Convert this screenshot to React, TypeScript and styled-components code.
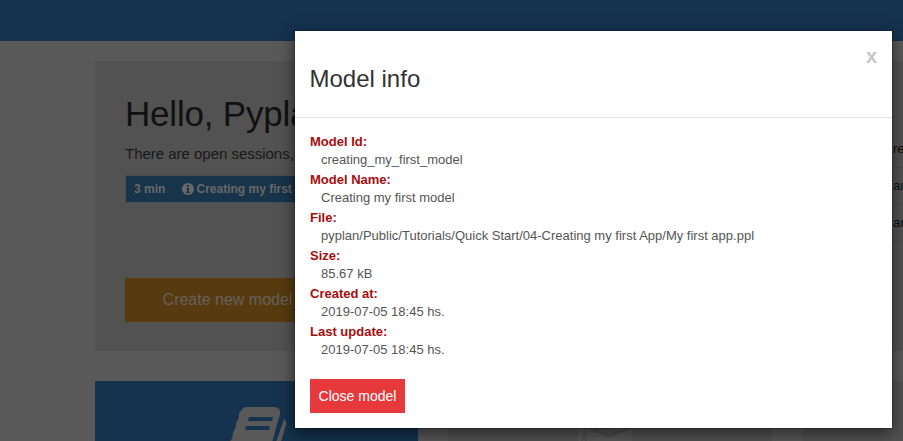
import React from 'react';
import styled, { createGlobalStyle } from 'styled-components';

const Global = createGlobalStyle`
  * { box-sizing: border-box; }
  body { margin: 0; overflow: hidden; background: #fff; font-family: "Liberation Sans", Arial, sans-serif; }
`;

const Page = styled.div`
  position: relative;
  width: 903px;
  height: 441px;
  overflow: hidden;
  background: #595959;
`;
const TopBar = styled.header`
  height: 41px;
  background: #15324e;
`;
const Content = styled.main`
  width: 1030px;
  padding: 20px 0 0 95px;
`;
const Row = styled.div`
  display: flex;
  gap: 30px;
  margin-bottom: 30px;
`;
const Welcome = styled.section`
  width: 677px;
  height: 290px;
  padding: 30px;
  background: #525252;
`;
const Heading = styled.h1`
  margin: 0;
  font-size: 35px;
  line-height: 46px;
  font-weight: 400;
  letter-spacing: -0.2px;
  color: #111;
  white-space: nowrap;
`;
const Lead = styled.p`
  margin: 7px 0 0;
  font-size: 15px;
  line-height: 20px;
  color: #181818;
  letter-spacing: -0.02px;
`;
const Session = styled.div`
  display: flex;
  align-items: center;
  width: 400px;
  height: 28px;
  margin-top: 11px;
  padding-left: 8px;
  border: 1px solid #4a4d50;
  font-size: 12px;
  font-weight: 700;
  color: #686868;
  background: #17344b;
  white-space: nowrap;
`;
const Minutes = styled.span`
  width: 47.5px;
`;
const InfoIcon = styled.svg`
  width: 12px;
  height: 12px;
  margin-right: 3px;
`;
const CreateButton = styled.button`
  display: block;
  width: 205px;
  height: 44px;
  margin-top: 75px;
  padding: 0;
  border: 0;
  font: 16px "Liberation Sans", Arial, sans-serif;
  color: #666159;
  background: #573a10;
`;
const Activity = styled.aside`
  width: 180px;
  height: 290px;
  padding: 70px 0 0 78px;
  background: #525252;
`;
const ActivityRow = styled.div`
  height: 37px;
  padding: 10px 0 0 13px;
  border-bottom: 1px solid #494949;
  font-size: 13px;
  line-height: 16px;
  color: #111;
`;
const Tile = styled.section<{ $primary?: boolean }>`
  display: flex;
  justify-content: center;
  flex: 0 0 ${p => (p.$primary ? 323 : 324)}px;
  height: 120px;
  padding-top: 25px;
  background: ${p => (p.$primary ? '#15324e' : '#525252')};
`;
const TileIcon = styled.svg`
  width: 64px;
  height: 64px;
`;
const Modal = styled.div`
  position: absolute;
  left: 294px;
  top: 30px;
  width: 599px;
  height: 399px;
  border: 1px solid rgba(0, 0, 0, 0.2);
  background: #fff;
  background-clip: padding-box;
  box-shadow: 0 5px 15px rgba(0, 0, 0, 0.5);
`;
const ModalHeader = styled.div`
  display: flex;
  justify-content: space-between;
  height: 87px;
  padding: 15px 15px 15px 14.5px;
  border-bottom: 1px solid #e1e1e1;
`;
const ModalTitle = styled.h2`
  margin: 19px 0 0;
  font-size: 24px;
  line-height: 28px;
  font-weight: 400;
  color: #333;
`;
const Close = styled.button`
  height: 20px;
  padding: 0;
  border: 0;
  background: none;
  font: 700 20px/18px "Liberation Sans", Arial, sans-serif;
  color: #c6c6c6;
`;
const ModalBody = styled.div`
  padding: 14px 15px;
`;
const Details = styled.dl`
  margin: 0 0 19px;
  font-size: 13px;
  line-height: 19px;
`;
const Term = styled.dt`
  font-weight: 700;
  color: #a80c0c;
`;
const Value = styled.dd`
  height: 19px;
  margin: 0 0 0 11px;
  line-height: 18px;
  color: #555;
`;
const CloseModel = styled.button`
  display: block;
  width: 95px;
  height: 34px;
  padding: 0;
  border: 0;
  font: 14px "Liberation Sans", Arial, sans-serif;
  color: #fff;
  background: #e6393b;
`;

const details: [string, string][] = [
  ['Model Id:', 'creating_my_first_model'],
  ['Model Name:', 'Creating my first model'],
  ['File:', 'pyplan/Public/Tutorials/Quick Start/04-Creating my first App/My first app.ppl'],
  ['Size:', '85.67 kB'],
  ['Created at:', '2019-07-05 18:45 hs.'],
  ['Last update:', '2019-07-05 18:45 hs.'],
];

export default function App() {
  return (
    <>
      <Global />
      <Page>
        <TopBar />
        <Content>
          <Row>
            <Welcome>
              <Heading>Hello, Pyplan</Heading>
              <Lead>There are open sessions,</Lead>
              <Session>
                <Minutes>3 min</Minutes>
                <InfoIcon viewBox="0 0 12 12">
                  <circle cx="6" cy="6" r="6" fill="#686868" />
                  <path d="M5 2h2v2H5zM4 5h3v4h1v1H4V9h1V6H4z" fill="#17344b" />
                </InfoIcon>
                Creating my first
              </Session>
              <CreateButton>Create new model</CreateButton>
            </Welcome>
            <Activity>
              <ActivityRow>re</ActivityRow>
              <ActivityRow>an</ActivityRow>
              <ActivityRow>an</ActivityRow>
            </Activity>
          </Row>
          <Row>
            <Tile $primary>
              <TileIcon viewBox="-1 0 64 64">
                <path
                  d="M15 5Q17 1 21 1H49Q55 2 54 8L42 51H4Q0 49 2 44L4 39Q3 37 5 34L7 30Q6 27 8 25L10 20Q9 17 12 14L13 10Q12 7 15 5Z"
                  fill="#595959"
                />
                <path d="M23 11H47L46 15H22ZM20 20H44L43 24H19Z" fill="#15324e" />
                <path d="M58 13Q61 15 60 19L49 55Q47 58 43 58H10L9 54H41Q44 54 45 51Z" fill="#595959" />
              </TileIcon>
            </Tile>
            <Tile>
              <TileIcon viewBox="0 0 64 64">
                <path d="M9 22L31 31L54 22V49H9Z" fill="#595959" />
                <path d="M9 21L31 30L54 21" fill="none" stroke="#4c4c4c" strokeWidth="3" />
                <path d="M6 17Q-1 31 2 47" fill="none" stroke="#595959" strokeWidth="4" />
              </TileIcon>
            </Tile>
            <Tile />
          </Row>
        </Content>
        <Modal role="dialog" aria-label="Model info">
          <ModalHeader>
            <ModalTitle>Model info</ModalTitle>
            <Close aria-label="Close">x</Close>
          </ModalHeader>
          <ModalBody>
            <Details>
              {details.map(([term, value]) => (
                <React.Fragment key={term}>
                  <Term>{term}</Term>
                  <Value>{value}</Value>
                </React.Fragment>
              ))}
            </Details>
            <CloseModel>Close model</CloseModel>
          </ModalBody>
        </Modal>
      </Page>
    </>
  );
}
